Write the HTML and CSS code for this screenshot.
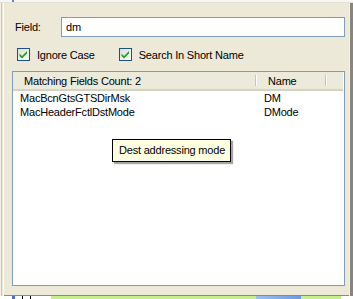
FILE: index.html
```html
<!DOCTYPE html>
<html lang="en">
<head>
    <meta charset="UTF-8">
    <title>Field Search</title>
    <link rel="stylesheet" href="styles.css">
</head>
<body>
    <div class="screen">
        <div class="top-strip"><span class="top-mark"></span></div>
        <div class="middle">
            <div class="left-strip"></div>
            <div class="window">
                <div class="field-row">
                    <label class="field-label" for="field">Field:</label>
                    <input class="field-input" id="field" type="text" value="dm">
                </div>

                <div class="options">
                    <label class="check">
                        <span class="box">
                            <svg width="11" height="11" viewBox="0 0 11 11"><path d="M1.5 4.5 L4 7 L9 2 L9 4.5 L4 9.5 L1.5 7 Z" fill="#21a121"/></svg>
                        </span>
                        Ignore Case
                    </label>
                    <label class="check">
                        <span class="box">
                            <svg width="11" height="11" viewBox="0 0 11 11"><path d="M1.5 4.5 L4 7 L9 2 L9 4.5 L4 9.5 L1.5 7 Z" fill="#21a121"/></svg>
                        </span>
                        Search In Short Name
                    </label>
                </div>

                <div class="list">
                    <div class="list-header">
                        <div class="col col-field">Matching Fields Count: 2</div>
                        <div class="col col-name">Name</div>
                        <div class="col col-rest"></div>
                    </div>
                    <div class="row">
                        <div class="cell cell-field">MacBcnGtsGTSDirMsk</div>
                        <div class="cell">DM</div>
                    </div>
                    <div class="row">
                        <div class="cell cell-field">MacHeaderFctlDstMode</div>
                        <div class="cell">DMode</div>
                    </div>

                    <!-- hover tooltip over the second row -->
                    <div class="tooltip">Dest addressing mode</div>
                </div>
            </div>
            <div class="shadow-right"></div>
        </div>
        <div class="bottom-strip">
            <span class="seg seg-blue"></span>
            <span class="seg seg-line"></span>
            <span class="seg seg-line2"></span>
            <span class="seg seg-green"></span>
            <span class="seg seg-grad"></span>
            <span class="seg seg-green2"></span>
        </div>
    </div>
</body>
</html>
```

FILE: styles.css
```css
body {
    margin: 0;
    font-family: "Liberation Sans", Arial, sans-serif;
    font-size: 11px;
    letter-spacing: -0.2px;
    color: #000;
    background-color: #fff;
}

.screen {
    width: 353px;
    height: 299px;
    display: flex;
    flex-direction: column;
    overflow: hidden;
}

.top-strip {
    height: 2px;
    background-color: #f7f6f1;
    border-bottom: 1px solid #e4e2d6;
}

.top-mark {
    display: block;
    margin-left: 12px;
    width: 2px;
    height: 2px;
    background-color: #6b7fd0;
}

.middle {
    display: flex;
    height: 293px;
}

.left-strip {
    width: 4px;
    background: linear-gradient(to right, #f3f1e8 0, #f3f1e8 1px, #c9c6b6 1px, #c9c6b6 2px, #ece9d8 2px, #ece9d8 3px, #fff 3px);
}

.window {
    width: 345px;
    background-color: #ece9d8;
    padding: 14px 4px 9px 8px;
    box-sizing: border-box;
    display: flex;
    flex-direction: column;
    border-bottom: 1px solid #8a8a82;
}

.shadow-right {
    width: 4px;
    background: linear-gradient(to right, #f3f1ea 0, #f3f1ea 1px, #87857d 1px);
}

.field-row {
    display: flex;
    align-items: center;
    height: 20px;
}

.field-label {
    width: 46px;
    padding-left: 3px;
}

.field-input {
    flex: 1;
    height: 20px;
    box-sizing: border-box;
    border: 1px solid #7f9db9;
    padding: 0 0 0 4px;
    margin: 0;
    font-family: inherit;
    font-size: 11px;
    letter-spacing: -0.2px;
    outline: none;
}

.options {
    display: flex;
    margin-top: 11px;
    padding-left: 5px;
    height: 13px;
}

.check {
    display: flex;
    align-items: center;
    gap: 7px;
    margin-right: 24px;
}

.box {
    width: 13px;
    height: 13px;
    box-sizing: border-box;
    border: 1px solid #1c5180;
    background: linear-gradient(135deg, #dcdcd7, #fff);
    display: flex;
    align-items: center;
    justify-content: center;
}

.list {
    margin-top: 10px;
    flex: 1;
    border: 1px solid #7f9db9;
    background-color: #fff;
    position: relative;
}

.list-header {
    display: flex;
    height: 19px;
    background-color: #ebeadb;
    border-bottom: 2px solid #d6d2c2;
    box-sizing: border-box;
    margin-right: 1px;
}

.col {
    display: flex;
    align-items: center;
    box-sizing: border-box;
    position: relative;
}

.col-field {
    width: 244px;
    padding-left: 11px;
}

.col-name {
    width: 70px;
    padding-left: 11px;
}

.col-field::after,
.col-name::after {
    content: "";
    position: absolute;
    right: 0;
    top: 3px;
    bottom: 3px;
    width: 1px;
    background-color: #c7c5b2;
    border-right: 1px solid #fff;
}

.col-rest {
    flex: 1;
}

.row {
    display: flex;
    height: 14px;
    align-items: center;
}

.row:first-of-type {
    margin-top: 1px;
}

.cell {
    padding-left: 7px;
}

.cell-field {
    width: 244px;
    box-sizing: border-box;
}

.tooltip {
    position: absolute;
    left: 99px;
    top: 67px;
    padding: 4px 5px 5px 6px;
    background-color: #ffffe1;
    border: 1px solid #000;
    box-shadow: 2px 2px 1px rgba(0, 0, 0, 0.35);
}

.bottom-strip {
    height: 3px;
    display: flex;
    background-color: #fff;
}

.seg {
    display: block;
    height: 3px;
}

.seg-blue {
    margin-left: 12px;
    width: 3px;
    background-color: #4b6fd4;
}

.seg-line {
    margin-left: 7px;
    width: 1px;
    background-color: #000;
}

.seg-line2 {
    margin-left: 7px;
    width: 1px;
    background-color: #000;
}

.seg-green {
    margin-left: 20px;
    width: 205px;
    background-color: #c4f08a;
}

.seg-grad {
    width: 45px;
    background: linear-gradient(to right, #9ec0f0, #6d9ae4);
}

.seg-green2 {
    width: 40px;
    background-color: #c4f08a;
}
```
